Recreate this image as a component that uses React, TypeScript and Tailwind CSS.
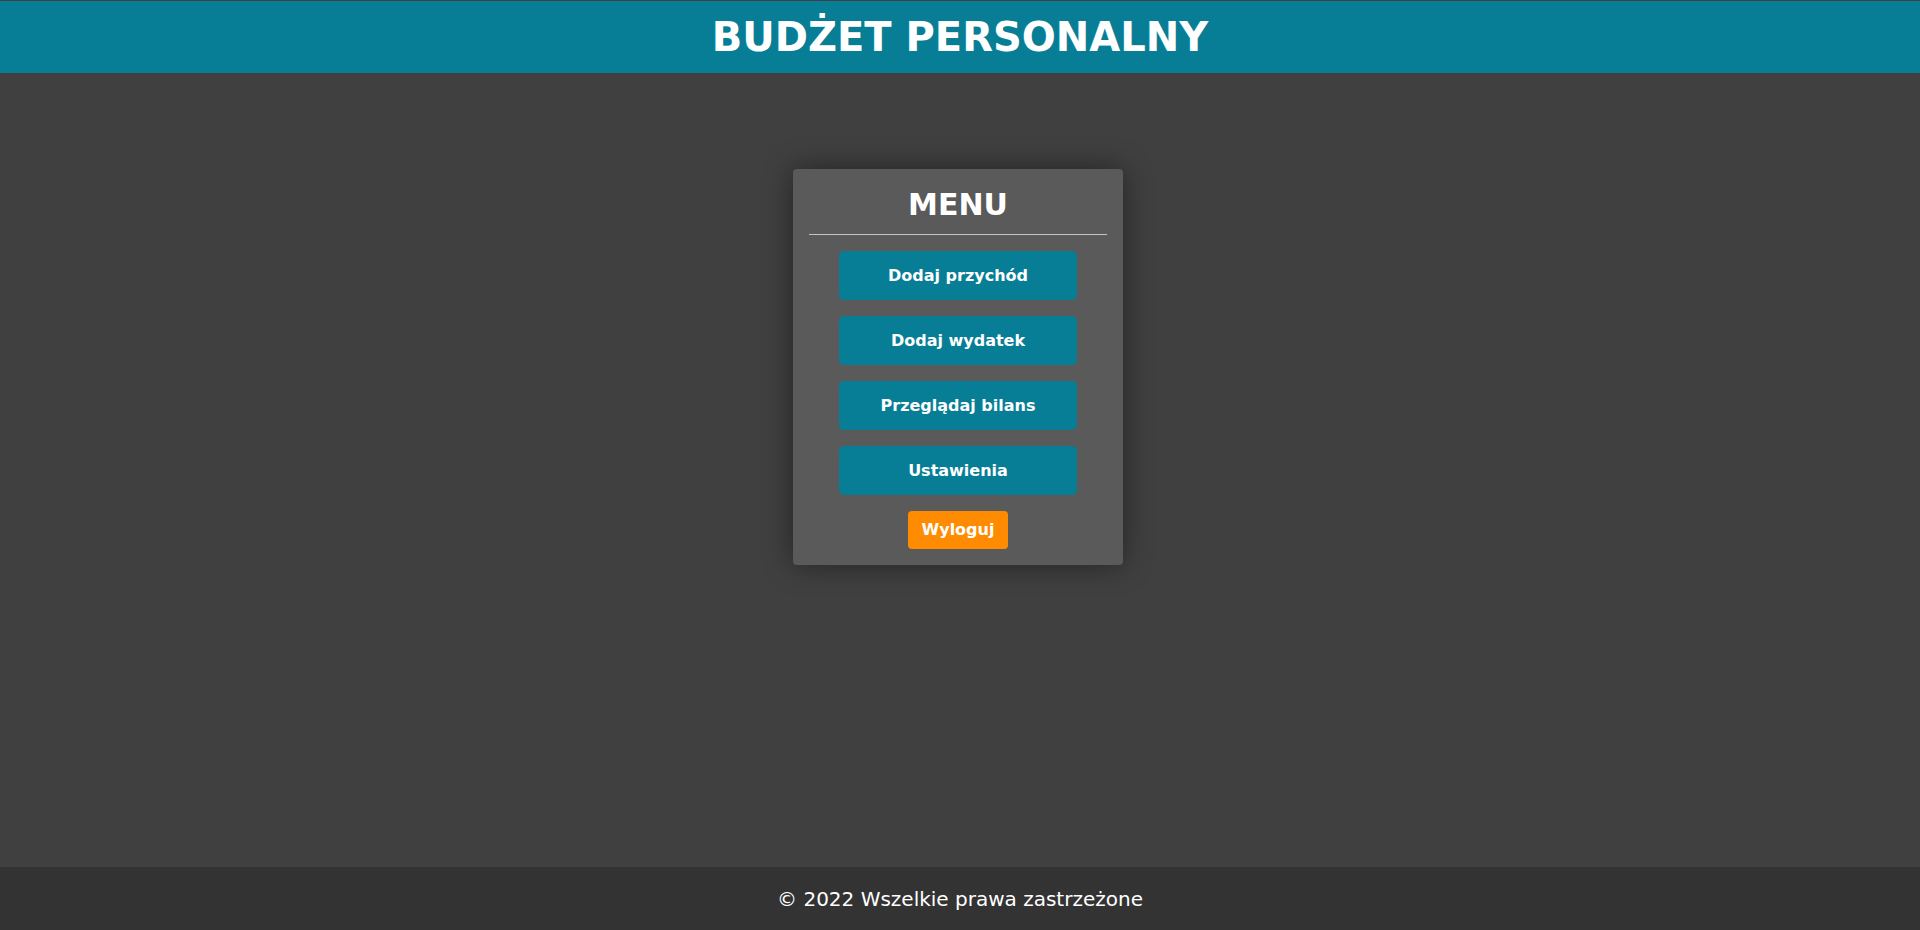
const menuItems = ["Dodaj przychód", "Dodaj wydatek", "Przeglądaj bilans", "Ustawienia"];

const App = () => {
  return (
    <div className="flex min-h-screen flex-col bg-[#404040] font-['DejaVu_Sans',Verdana,sans-serif] text-white">
      <header className="mt-px flex h-[72px] items-center justify-center bg-[#077e96]">
        <h1 className="text-[40px] leading-none font-bold">BUDŻET PERSONALNY</h1>
      </header>

      <main className="flex-1 pt-[96px] pr-1">
        <div className="mx-auto flex w-[330px] flex-col rounded bg-[#5a5a5a] px-4 pt-[18px] pb-4 shadow-[0_0_30px_rgba(0,0,0,0.45)]">
          <h2 className="text-center text-[30px] leading-[36px] font-bold">MENU</h2>
          <hr className="mt-[11px] border-t border-[#c4c4c4]" />

          <nav className="mt-4 flex flex-col items-center gap-4">
            {menuItems.map((item) => (
              <button
                key={item}
                className="flex h-[49px] w-[238px] items-center justify-center rounded-[5px] bg-[#077e96] text-base font-bold"
              >
                {item}
              </button>
            ))}
            <button className="h-[38px] w-[100px] rounded-[4px] bg-[#ff8c00] text-base font-bold">
              Wyloguj
            </button>
          </nav>
        </div>
      </main>

      <footer className="flex h-[63px] items-center justify-center bg-[#333333] text-[20px]">
        © 2022 Wszelkie prawa zastrzeżone
      </footer>
    </div>
  );
};

export default App;
